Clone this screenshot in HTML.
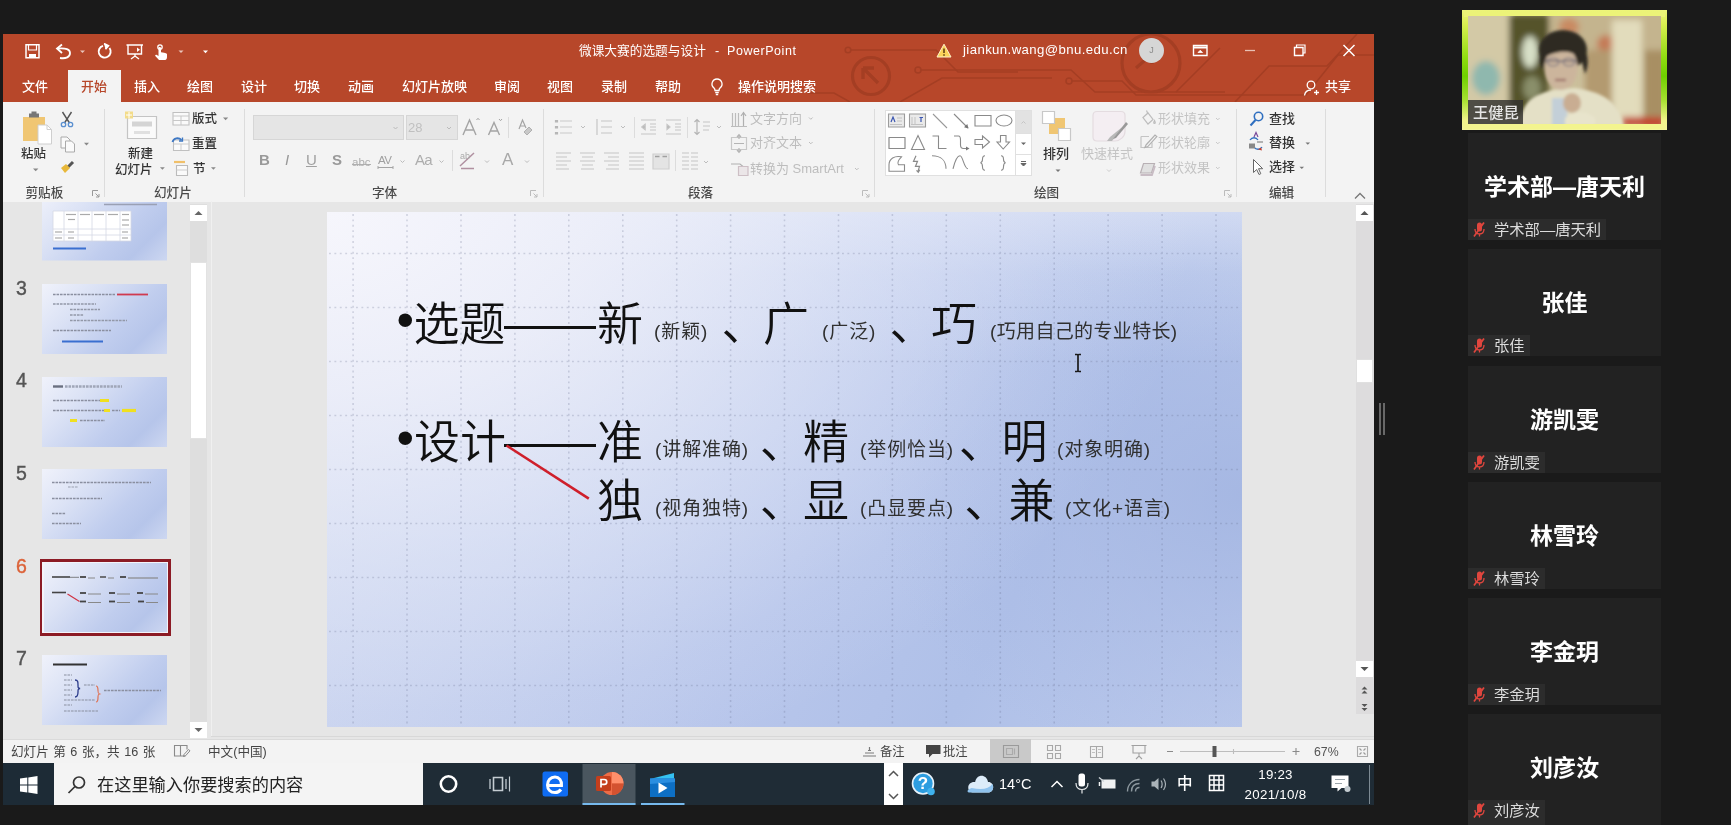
<!DOCTYPE html>
<html lang="zh-CN">
<head>
<meta charset="utf-8">
<title>微课大赛的选题与设计 - PowerPoint</title>
<style>
*{box-sizing:border-box;margin:0;padding:0}
html,body{width:1731px;height:825px;overflow:hidden;background:#1a1a1a}
body{position:relative;font-family:"Liberation Sans","Noto Sans CJK SC",sans-serif;font-size:12px;color:#333}
.a{position:absolute;white-space:nowrap}
#ppt{left:3px;top:34px;width:1371px;height:771px;background:#e6e6e6;overflow:hidden;filter:blur(.7px)}
#in{left:-3px;top:-34px;width:1731px;height:825px}
#title{left:3px;top:34px;width:1371px;height:68px;background:#b7472a}
#ribbon{left:3px;top:102px;width:1371px;height:100px;background:#f3f3f3}
.tab{top:79px;font-size:13px;font-weight:500;color:#fff;line-height:16px}
.t{font-size:11.5px;color:#333;line-height:14px;font-weight:500}
.g{color:#aaa;font-weight:400}
.gl{top:185px;font-size:12.600px;color:#4a4a4a;line-height:14px;font-weight:500}
.sep{top:108px;width:1px;height:88px;background:#dcdcdc}
#panel{left:3px;top:202px;width:1371px;height:537px;background:#e6e6e6}
.num{left:16px;font-size:19.500px;color:#505050;line-height:20px;-webkit-text-stroke:.4px currentColor}
.th{left:38px;width:126px;height:71px;background:linear-gradient(135deg,#f0f2fb 0%,#dbe2f5 30%,#c0cdee 62%,#b6c5ea 80%,#cdd7f1 100%)}
#slide{left:327px;top:212px;width:915px;height:515px;background:radial-gradient(ellipse 95% 115% at 0% 0%,rgba(246,246,252,1) 0%,rgba(240,241,250,.85) 30%,rgba(232,236,249,.5) 60%,rgba(224,230,247,.15) 85%,rgba(220,228,246,0) 100%),linear-gradient(180deg,rgba(236,239,250,.55) 0%,rgba(236,239,250,.2) 12%,rgba(236,239,250,0) 30%),radial-gradient(ellipse 40% 55% at 100% 55%,rgba(164,182,226,.9) 0%,rgba(168,185,228,.5) 50%,rgba(170,187,229,0) 100%),linear-gradient(118deg,#d2daf1 0%,#c5d0ee 30%,#b8c6eb 55%,#afc0e8 75%,#bccaec 100%);overflow:hidden}
.big{font-size:46px;line-height:50px;color:#111;font-family:"Liberation Sans","Noto Sans CJK SC",sans-serif;font-weight:350}
.sm{font-size:19px;line-height:24px;color:#303030;font-weight:400;letter-spacing:.9px}
#status{left:3px;top:739px;width:1371px;height:24px;background:#f3f3f3;border-top:1px solid #dadada}
#task{left:3px;top:763px;width:1371px;height:42px;background:#1f2c36}
.tile{left:1468px;width:193px;height:107px;background:#222;filter:blur(.45px)}
.tile b{position:absolute;left:0;right:0;top:38px;text-align:center;font-size:23px;line-height:32px;color:#fff;font-weight:700}
.tile i{position:absolute;left:0;top:86px;bottom:0;background:#2c2c2c;color:#dcdcdc;font-style:normal;font-size:15.300px;line-height:21px;padding:0 5px 0 26px}
.tile svg{position:absolute;left:4px;top:88px}
</style>
</head>
<body>
<div id="ppt" class="a"><div id="in" class="a">
<!--TITLE-->
<div id="title" class="a"></div>
<svg class="a" style="left:3px;top:34px" width="1371" height="68" viewBox="3 34 1371 68" fill="none" stroke="#a03c22" stroke-width="1.600" opacity=".8">
<circle cx="871" cy="76" r="18.500" stroke-width="3.200"/><path d="M863 68l15 15M863 68h11M863 68v11" stroke-width="3.400"/>
<circle cx="848" cy="50" r="2.800"/><path d="M851 50h85l22 22h60"/>
<circle cx="918" cy="70" r="3"/><path d="M921 70h150l24 22h130"/>
<circle cx="1151" cy="63" r="29" stroke-width="3.200"/><path d="M1136 68l16-14M1152 54h-10M1152 54v10" stroke-width="3.200"/>
<path d="M900 102l42-24h110"/><circle cx="1069" cy="81" r="3"/><path d="M1072 81h50l14 14h170l32-40h40"/>
<path d="M1235 102l34-36h58l30-32M1176 92l44-44"/>
<path d="M850 102l-16-9h-26"/>
</svg>
<svg class="a" style="left:24px;top:43px" width="190" height="18" viewBox="24 43 190 18" fill="none" stroke="#fff" stroke-width="1.5">
<path d="M26 44.7h13v13h-13z"/><path d="M28.5 45v5h8v-5" stroke-width="1.2"/><path d="M29 58v-4h7v4" fill="#fff" stroke="none"/>
<path d="M60 58c6 1 10-1 10-5s-4-5-12-4.500" stroke-width="1.8"/><path d="M62 44.500l-5 4 5 4.500" stroke-width="1.8"/>
<path d="M80 50.500l2.500 2.500 2.500-2.500z" fill="#e9c5bb" stroke="none"/>
<path d="M109.500 48a6 6 0 1 1-6.500-2.200" stroke-width="1.9"/><path d="M104 43.500l4.500 2.300-3 3.500" stroke-width="1.6" fill="#fff"/>
<path d="M126.500 45h16.500M128 45v9h13.500v-9M135 54v3M131 59l4-3 4 3" stroke-width="1.4"/><path d="M137 47.500l3 2.200-3 2.200z" fill="#fff" stroke="none"/>
<circle cx="160" cy="47" r="2.200" stroke-width="1.3"/><path d="M158.500 51v5l-2-1.200c-1-.5-1.800.6-1 1.400l3.500 3.800h6c1.500 0 2-1.500 2-3v-2.500c0-1-1-1.600-6-2.200v-4c0-1.600-2.500-1.600-2.500 0z" fill="#fff" stroke="none"/>
<path d="M178.500 50.500l2.500 2.500 2.500-2.500z" fill="#e9c5bb" stroke="none"/>
<path d="M203 50.500l2.500 2.800 2.500-2.800z" fill="#fff" stroke="none"/><path d="M203 48.300h5" stroke-width="1" opacity=".0"/>
</svg>
<div class="a" style="left:579px;top:43px;font-size:12.7px;line-height:16px;color:#fff">微课大赛的选题与设计</div>
<div class="a" style="left:715px;top:43px;font-size:12.5px;line-height:16px;color:#fff">-</div>
<div class="a" style="left:727px;top:43px;font-size:12.5px;line-height:16px;color:#fff;letter-spacing:.55px">PowerPoint</div>
<svg class="a" style="left:936px;top:43px" width="16" height="15" viewBox="0 0 16 15"><path d="M8 1.200L15 14H1z" fill="#fbd35a" stroke="#fff3c8" stroke-width="1"/><path d="M8 5.500v4.500M8 11.300v1.400" stroke="#5a3a10" stroke-width="1.5"/></svg>
<div class="a" style="left:963px;top:42px;font-size:13.2px;line-height:16px;color:#fff;letter-spacing:.4px">jiankun.wang@bnu.edu.cn</div>
<div class="a" style="left:1139px;top:38px;width:25px;height:25px;border-radius:50%;background:#d6d6d6;color:#8a8a8a;font-size:9px;line-height:25px;text-align:center">J</div>
<svg class="a" style="left:1190px;top:42px" width="170" height="18" viewBox="1190 42 170 18" fill="none" stroke="#fff" stroke-width="1.4">
<path d="M1193.500 45.500h13.500v10h-13.500z"/><path d="M1193.500 47.500h13.500" stroke-width="2"/><path d="M1198 52.500l2.300-2.300 2.300 2.300z" fill="#fff" stroke-width=".8"/>
<path d="M1245 50.500h10" stroke-width="1.300" stroke="#e8c0b4"/>
<path d="M1294.500 47.500h8.500v8h-8.500z"/><path d="M1296.500 47v-2h8.500v8h-2" stroke-width="1.200"/>
<path d="M1343.500 45l11 11M1354.500 45l-11 11" stroke-width="1.500"/>
</svg>
<div class="a" style="left:68px;top:70px;width:53px;height:33px;background:#f3f3f3"></div>
<div class="a tab" style="left:81px;color:#b7472a">开始</div>
<div class="a tab" style="left:22px">文件</div>
<div class="a tab" style="left:134px">插入</div>
<div class="a tab" style="left:187px">绘图</div>
<div class="a tab" style="left:241px">设计</div>
<div class="a tab" style="left:294px">切换</div>
<div class="a tab" style="left:348px">动画</div>
<div class="a tab" style="left:402px">幻灯片放映</div>
<div class="a tab" style="left:494px">审阅</div>
<div class="a tab" style="left:547px">视图</div>
<div class="a tab" style="left:601px">录制</div>
<div class="a tab" style="left:655px">帮助</div>
<svg class="a" style="left:709px;top:77px" width="16" height="20" viewBox="0 0 16 20" fill="none" stroke="#fff" stroke-width="1.300"><path d="M8 2a5 5 0 0 0-3 9c.8.800 1 1.500 1 2.500h4c0-1 .2-1.700 1-2.500a5 5 0 0 0-3-9z"/><path d="M6.200 15.500h3.600M6.800 17.500h2.400"/></svg>
<div class="a tab" style="left:738px">操作说明搜索</div>
<svg class="a" style="left:1302px;top:79px" width="18" height="18" viewBox="0 0 18 18" fill="none" stroke="#fff" stroke-width="1.300"><circle cx="9" cy="6" r="3.800"/><path d="M2.500 16.500c.5-4 3-5.500 6.500-5.500M12 13.500h5M14.500 11v5"/></svg>
<div class="a tab" style="left:1325px">共享</div>

<!--RIBBON-->
<div id="ribbon" class="a"></div>
<div class="a" style="left:0;top:1px;width:1731px;height:0">
<!-- clipboard -->
<svg class="a" style="left:18px;top:108px" width="80" height="72" viewBox="18 108 80 72" fill="none">
<path d="M23 116h22v24h-22z" fill="#f0c673"/><path d="M29 112.500h10v4h-10z" fill="#777"/><path d="M31.500 110.500h5v3h-5z" fill="#777"/>
<path d="M38 124h9l4.500 4.500v14.500h-13.500z" fill="#fff" stroke="#cfcfcf" stroke-width="1"/><path d="M47 124v4.500h4.500" stroke="#cfcfcf" stroke-width="1"/>
<path d="M33 167.500l2.700 2.700 2.700-2.700z" fill="#888"/>
<path d="M62.500 111l7 11M71.500 111l-7 11" stroke="#555" stroke-width="1.400"/><circle cx="63.500" cy="123.500" r="2.200" stroke="#5a8fd0" stroke-width="1.300"/><circle cx="70.500" cy="123.500" r="2.200" stroke="#5a8fd0" stroke-width="1.300"/>
<path d="M61 136h6l3 3v8h-9z" fill="#fafafa" stroke="#aaa" stroke-width="1"/><path d="M65.500 140h6l3 3v8h-9z" fill="#fafafa" stroke="#aaa" stroke-width="1"/>
<path d="M84 141.800l2.500 2.600 2.500-2.600z" fill="#888"/>
<path d="M66 168l7-7" stroke="#555" stroke-width="3"/><path d="M61 167l5-4 4 4-5 5z" fill="#e8b83a"/>
</svg>
<div class="a t" style="left:21px;top:146px;font-size:12.500px">粘贴</div>
<div class="a gl" style="left:25.500px">剪贴板</div>
<svg class="a" style="left:92px;top:189px" width="8" height="8" viewBox="0 0 8 8" fill="none" stroke="#999" stroke-width="1"><path d="M.5 6V.5H6M3.500 3.500l3.500 3.500M7 4v3H4"/></svg>
<div class="a sep" style="left:104px"></div>
<!-- slides -->
<svg class="a" style="left:120px;top:108px" width="100" height="72" viewBox="120 108 100 72" fill="none">
<path d="M127.500 115.500h29v22h-29z" fill="#fafafa" stroke="#c4c4c4" stroke-width="1.200"/><path d="M132 120.500h20v5h-20z" fill="#d4d4d4"/><path d="M134 130h16v3h-16z" fill="#e0e0e0"/>
<path d="M125 110.500h8v7h-8z" fill="#f3dc8a"/><path d="M129 111v6M126 114h6" stroke="#fff" stroke-width="1"/>
<path d="M173 111.500h16v12.500h-16z" fill="#fafafa" stroke="#c0c0c0" stroke-width="1.100"/><path d="M173 115h16M181 115v9M173 119.500h16" stroke="#c8c8c8" stroke-width="1"/>
<path d="M224 117.500l2.400 2.500 2.400-2.500z" fill="#888"/>
<path d="M173.500 139h15.500v10.500h-15.500z" fill="#fafafa" stroke="#c0c0c0" stroke-width="1.100"/><path d="M173.500 143h15.500M181 143v6" stroke="#ccc" stroke-width="1"/><path d="M172.500 141c1-4 6-5 9-2" stroke="#3e78c4" stroke-width="1.800"/><path d="M182.500 136.500v3.500h-3.500" stroke="#3e78c4" stroke-width="1.300"/>
<path d="M174 161h11" stroke="#f0c06a" stroke-width="2.200"/><path d="M176.500 164.500h11v10h-11z" fill="#fafafa" stroke="#bbb" stroke-width="1.100"/><path d="M176.500 169h11" stroke="#ccc"/>
<path d="M160 166.300l2.400 2.500 2.400-2.500z" fill="#888"/><path d="M211 166.300l2.400 2.500 2.400-2.500z" fill="#888"/>
</svg>
<svg class="a" style="left:222px;top:115px" width="8" height="6" viewBox="0 0 8 6"><path d="M1 1.500l2.600 2.700 2.600-2.700z" fill="#888"/></svg>
<div class="a t" style="left:128px;top:146px;font-size:12.500px">新建</div>
<div class="a t" style="left:115px;top:162px;font-size:12.500px">幻灯片</div>
<div class="a t" style="left:192px;top:111px;font-size:12.500px">版式</div>
<div class="a t" style="left:192px;top:136px;font-size:12.500px">重置</div>
<div class="a t" style="left:193px;top:161px;font-size:12.500px">节</div>
<div class="a gl" style="left:154px">幻灯片</div>
<div class="a sep" style="left:244px"></div>
<!-- font -->
<div class="a" style="left:253px;top:114px;width:151px;height:25px;background:#e5e5e5;border:1px solid #d6d6d6"></div>
<div class="a" style="left:406px;top:114px;width:52px;height:25px;background:#e5e5e5;border:1px solid #d6d6d6"></div>
<div class="a" style="left:408px;top:119px;font-size:13px;line-height:16px;color:#c0c0c0">28</div>
<svg class="a" style="left:250px;top:108px" width="292" height="72" viewBox="250 108 292 72" fill="none" stroke="#a4a4a4" stroke-width="1.400">
<path d="M393.500 126l2 2 2-2M447 126l2 2 2-2" stroke="#bbb" stroke-width="1"/>
<path d="M463 134l6.500-15 6.500 15M465.500 129h8" /><path d="M476.500 119l1.500-1.700 1.500 1.700" stroke-width="1"/>
<path d="M488.500 134l5.500-12.500 5.500 12.500M490.500 130h7"/><path d="M499 118l1.500 1.700 1.500-1.700" stroke-width="1"/>
<path d="M508.500 116v21" stroke="#dcdcdc" stroke-width="1"/>
<path d="M519 128l3.500-9 3.500 8M520 125h5" stroke-width="1.200"/><path d="M524 131l5-5 3 3-5 5z" fill="#c8c8c8" stroke="#b0b0b0" stroke-width="1"/>
<path d="M452.500 149v21" stroke="#dcdcdc" stroke-width="1"/>
<path d="M352 163.500h19" stroke="#b0b0b0" stroke-width="1"/>
<path d="M378 166.500h15M378 165v3M393 165v3" stroke-width="1"/>
<path d="M400.500 159.500l2 2 2-2M439.500 159.500l2 2 2-2M485 159.500l2 2 2-2M525 159.500l2 2 2-2" stroke="#bbb" stroke-width="1"/>
<path d="M460 165l14-13M461 167.500h13" stroke="#b090a0" stroke-width="1.500"/>
<path d="M533.500 190" />
</svg>
<div class="a" style="left:259px;top:150px;font-size:15px;line-height:18px;color:#999;font-weight:700">B</div>
<div class="a" style="left:285px;top:150px;font-size:15px;line-height:18px;color:#999;font-style:italic">I</div>
<div class="a" style="left:306px;top:150px;font-size:15px;line-height:18px;color:#a0a0a0;text-decoration:underline">U</div>
<div class="a" style="left:332px;top:150px;font-size:15px;line-height:18px;color:#999;font-weight:700">S</div>
<div class="a" style="left:352px;top:154px;font-size:11.500px;line-height:14px;color:#adadad">abc</div>
<div class="a" style="left:378px;top:152px;font-size:11.500px;line-height:14px;color:#a0a0a0;letter-spacing:-.5px">AV</div>
<div class="a" style="left:415px;top:150px;font-size:15px;line-height:18px;color:#adadad;letter-spacing:-.8px">Aa</div>
<div class="a" style="left:460px;top:150px;font-size:9px;line-height:10px;color:#aaa">ab</div>
<div class="a" style="left:502px;top:149px;font-size:17px;line-height:20px;color:#a8a8a8">A</div>
<div class="a gl" style="left:372px;">字体</div>
<svg class="a" style="left:530px;top:189px" width="8" height="8" viewBox="0 0 8 8" fill="none" stroke="#bbb" stroke-width="1"><path d="M.5 6V.5H6M3.500 3.500l3.500 3.500M7 4v3H4"/></svg>
<div class="a sep" style="left:543px"></div>
<!-- paragraph -->
<svg class="a" style="left:550px;top:108px" width="320" height="72" viewBox="550 108 320 72" fill="none" stroke="#c6c6c6" stroke-width="1.200">
<g stroke="#c9c9c9"><path d="M560 120h12M560 126h12M560 132h12"/><path d="M555.500 119.500h2v1.500h-2zM555.500 125.500h2v1.500h-2zM555.500 131.500h2v1.500h-2z" fill="#bbb" stroke="#b6b6b6"/></g>
<path d="M597 118v16M601 120h11M601 126h11M601 132h11"/>
<path d="M581 125l2 2 2-2M621 125l2 2 2-2M717 125l2 2 2-2M809 116.500l1.800 1.800 1.800-1.800M809 141l1.800 1.800 1.800-1.800M855 167l1.800 1.800 1.800-1.800M704 160l2 2 2-2" stroke="#bdbdbd" stroke-width="1"/>
<path d="M634.500 116v21M687.500 116v21M675.500 149v21" stroke="#dcdcdc" stroke-width="1"/>
<path d="M641 119h15M641 133h15M650 123h6M650 126h6M650 129h6M645 123.500l-3 2.500 3 2.500z"/><path d="M645 123.500l-3 2.500 3 2.500z" fill="#b0b0b0"/>
<path d="M666 119h15M666 133h15M675 123h6M675 126h6M675 129h6"/><path d="M667 123.500l3 2.500-3 2.500z" fill="#b0b0b0"/>
<path d="M697 118.500v15M694.500 121l2.500-2.500 2.500 2.500M694.500 131l2.500 2.500 2.500-2.500" stroke="#b4b4b4"/><path d="M703 121h7M703 125h7M703 129h6"/>
<path d="M556 152h15M556 156h11M556 160h15M556 164h11M556 168h13"/>
<path d="M580 152h15M582 156h11M580 160h15M582 164h11M581 168h13"/>
<path d="M604 152h15M608 156h11M604 160h15M608 164h11M606 168h13"/>
<path d="M629 152h15M629 156h15M629 160h15M629 164h15M629 168h15"/>
<path d="M653 153h16v15h-16z" fill="#e4e4e4" stroke="#cfcfcf"/><path d="M655 155.500h4.500M662.500 155.500h4.500" stroke="#a0a0a0" stroke-width="1.500"/>
<path d="M682 152h7M691 152h7M682 156h7M691 156h7M682 160h7M691 160h7M682 164h7M691 164h7M682 168h7M691 168h7"/>
<path d="M732.500 112v13M735.500 112v13M738.500 112v13M731 125.500h16" stroke="#bcbcbc"/><path d="M743.500 112v13M741 115l2.500-3.500 2.500 3.500" stroke="#b0b0b0"/>
<path d="M731.500 136.500h15v12h-15z" stroke="#c8c8c8"/><path d="M739 134v4M737 136l2-2.300 2 2.300M739 147v4M737 149l2 2.300 2-2.300M734 142.500h10" stroke="#b4b4b4"/>
<path d="M731 163h9l3 2.500-3 2.500" stroke="#b0b0b0"/><path d="M738.500 165.500h9.500v9h-9.500z" fill="#ebe6e8" stroke="#cdbfc5"/>
</svg>
<div class="a t g" style="left:750px;top:111px;font-size:13px;color:#bdbdbd">文字方向</div>
<div class="a t g" style="left:750px;top:135px;font-size:13px;color:#bdbdbd">对齐文本</div>
<div class="a t g" style="left:750px;top:161px;font-size:13px;color:#bdbdbd">转换为 SmartArt</div>
<div class="a gl" style="left:688px;">段落</div>
<svg class="a" style="left:862px;top:189px" width="8" height="8" viewBox="0 0 8 8" fill="none" stroke="#bbb" stroke-width="1"><path d="M.5 6V.5H6M3.500 3.500l3.500 3.500M7 4v3H4"/></svg>
<div class="a sep" style="left:874px"></div>
<!-- drawing -->
<div class="a" style="left:885px;top:109px;width:147px;height:66px;background:#fff;border:1px solid #e0e0e0"></div>
<div class="a" style="left:1016px;top:110px;width:15px;height:22px;background:#e2e2e2"></div>
<div class="a" style="left:1015px;top:110px;width:1px;height:64px;background:#e0e0e0"></div>
<div class="a" style="left:1016px;top:132px;width:15px;height:1px;background:#e0e0e0"></div>
<div class="a" style="left:1016px;top:153px;width:15px;height:1px;background:#e0e0e0"></div>
<svg class="a" style="left:886px;top:110px" width="146" height="64" viewBox="886 110 146 64" fill="none" stroke="#8a8a8a" stroke-width="1.100">
<path d="M888.500 113h16v13h-16z" fill="#eaeaea" stroke="#9c9c9c"/><path d="M891 121l2-5 2 5" stroke="#3a55b0" stroke-width="1.200"/><path d="M897 117h5M897 120h5M890 123.500h12" stroke="#c2c2c2" stroke-width="1"/>
<path d="M909.500 113h16v13h-16z" fill="#eaeaea" stroke="#9c9c9c"/><path d="M919.500 116.500l3.500 0M921 116v5" stroke="#3a55b0" stroke-width="1.200"/><path d="M912 116v8M915 116v8M911 123.500h12" stroke="#c2c2c2" stroke-width="1"/>
<path d="M933 113l14 14" stroke="#9a9a9a"/><path d="M954 113l14 14" stroke="#8a8a8a"/><path d="M968.500 127.500l-4.500-1.200 3.300-3.300z" fill="#777" stroke="none"/>
<path d="M975 114.500h16v10.500h-16z"/><ellipse cx="1004" cy="119.500" rx="8" ry="5.500"/>
<path d="M889 136.500h16v11h-16z" stroke-linejoin="round" stroke-width="1.200"/><path d="M911.500 148.500l6.500-14 6.500 14z"/>
<path d="M932.500 135h6v12.500h8" /><path d="M954 135h4.500c2 0 2 2 2 4v5c0 2 1 3.500 3 3.500h4"/><path d="M969.500 147.500l-3.500-2v4z" fill="#777" stroke="none"/>
<path d="M975 138.500h7.500v-3.500l7 6-7 6v-3.500h-7.500z"/><path d="M1000.500 134.500h5.500v6.500h3.500l-6.300 7-6.200-7h3.500z"/>
<g transform="translate(0,-2.200)"><path d="M889 172.500h15.500v-6.500h-6c-1.500-2 0-5 3-8-7-1.500-12.500 2-12.500 8z"/><path d="M916 157l-2.500 5.500h4l-2 5h4l-1.500 5M916.500 171.500l1.800 2 1.500-2.500" stroke-width="1.200"/>
<path d="M932 157c9 0 14 5 14 13"/><path d="M953 170c2-8 4-13 7-13s4 13 8 13"/>
<path d="M985 157c-2.500 0-2.500 1.500-2.500 3.500s0 3-2 3.500c2 .5 2 2 2 4s0 3.500 2.500 3.500"/><path d="M1001 157c2.500 0 2.500 1.500 2.500 3.500s0 3 2 3.500c-2 .5-2 2-2 4s0 3.500-2.500 3.500"/></g>
<path d="M1021.500 122.500l2-2 2 2" stroke="#c4c4c4" stroke-width="1"/><path d="M1021 141.500l2.500 2.500 2.500-2.500z" fill="#666" stroke="none"/><path d="M1021 162.500l2.500 2.500 2.500-2.500zM1021 160.500h5" fill="#666" stroke="#666" stroke-width="1"/>
</svg>
<svg class="a" style="left:1040px;top:108px" width="92" height="68" viewBox="1040 108 92 68" fill="none">
<path d="M1049 117h16v16h-16z" fill="#f0c673"/><path d="M1042.500 110.500h12v12h-12z" fill="#fff" stroke="#c8c8c8" stroke-width="1.200"/><path d="M1058.500 127.500h12v12h-12z" fill="#fff" stroke="#c8c8c8" stroke-width="1.200"/>
<path d="M1055.500 168.500l2.500 2.500 2.500-2.500z" fill="#777"/><path d="M1107 168.500l2 2 2-2" stroke="#ccc" stroke-width="1"/>
<path d="M1097 110.500h24c2.500 0 4 1.500 4 4v16c0 5-5 9.500-10 9.500h-18c-2.500 0-4-1.500-4-4v-21.500c0-2.500 1.500-4 4-4z" fill="#f4eef2" stroke="#e4dce0" stroke-width="1.200"/>
<path d="M1126 123l-14 17h-5l3-4z" fill="#b8b8b8"/><path d="M1126 121l2 2-12 14-3 1z" fill="#999"/>
</svg>
<div class="a t" style="left:1043px;top:146px;font-size:13px">排列</div>
<div class="a t g" style="left:1081px;top:146px;font-size:13px;color:#c4c4c4">快速样式</div>
<svg class="a" style="left:1138px;top:108px" width="95" height="70" viewBox="1138 108 95 70" fill="none" stroke="#bdbdbd" stroke-width="1.200">
<path d="M1143 116.500l5-4.500 5 6.500-5 4.500z"/><path d="M1146.500 109.500l1.500 3.500M1154.500 119.500c1 2 1 3 0 3s-1-1 0-3z"/>
<path d="M1141 135.500h8M1141 135.500v11h11v-5" stroke="#c4c4c4"/><path d="M1146 144l9-10 1.800 1.600-9 10-3 1z" stroke="#b0b0b0"/>
<path d="M1143.500 162.500h11l-3 9.500h-11z" fill="#e0e0e0" stroke="#b8b0b4"/><path d="M1140.500 174h11.500l3-9" stroke="#c8bcc4" stroke-width="1.800"/>
<path d="M1216 117l1.800 1.800 1.800-1.800M1216 141l1.800 1.800 1.800-1.800M1216 166l1.800 1.800 1.800-1.800" stroke="#c8c8c8" stroke-width="1"/>
</svg>
<div class="a t g" style="left:1158px;top:111px;font-size:13px;color:#c4c4c4">形状填充</div>
<div class="a t g" style="left:1158px;top:135px;font-size:13px;color:#c4c4c4">形状轮廓</div>
<div class="a t g" style="left:1158px;top:160px;font-size:13px;color:#c4c4c4">形状效果</div>
<div class="a gl" style="left:1034px;">绘图</div>
<svg class="a" style="left:1224px;top:189px" width="8" height="8" viewBox="0 0 8 8" fill="none" stroke="#bbb" stroke-width="1"><path d="M.5 6V.5H6M3.500 3.500l3.500 3.500M7 4v3H4"/></svg>
<div class="a sep" style="left:1236px"></div>
<!-- editing -->
<svg class="a" style="left:1246px;top:108px" width="70" height="70" viewBox="1246 108 70 70" fill="none">
<circle cx="1258.500" cy="115.500" r="4.200" stroke="#2f6fc0" stroke-width="1.600"/><path d="M1255.500 119l-5 5.500" stroke="#2f6fc0" stroke-width="2"/>
<path d="M1250 139c2-3 6-3 8 0M1262 146c-2 3-6 3-8 0" stroke="#2f6fc0" stroke-width="1.300"/><path d="M1254 136l2-4.500 2 4.500" stroke="#7a4a9a" stroke-width="1.200"/><path d="M1249 142.500h6v5h-6z" fill="#888"/><path d="M1257 141h6" stroke="#888" stroke-width="1.200"/><path d="M1258 148.500l3-2 1 3z" fill="#c04030"/>
<path d="M1253.500 158.500v13l3.200-3 2.300 5 1.800-.800-2.300-5h4.200z" fill="#fff" stroke="#666" stroke-width="1"/>
<path d="M1305.500 141.500l2.300 2.300 2.300-2.300z" fill="#777"/><path d="M1299.500 165.800l2.300 2.300 2.300-2.300z" fill="#777"/>
</svg>
<div class="a t" style="left:1269px;top:111px;font-size:13px">查找</div>
<div class="a t" style="left:1269px;top:135px;font-size:13px">替换</div>
<div class="a t" style="left:1269px;top:159px;font-size:13px">选择</div>
<div class="a gl" style="left:1269px;">编辑</div>
<div class="a sep" style="left:1325px"></div>
<svg class="a" style="left:1353px;top:190px" width="14" height="10" viewBox="0 0 14 10" fill="none" stroke="#777" stroke-width="1.300"><path d="M2 7.500l5-5 5 5"/></svg>
</div>
<!--PANEL-->
<div id="panel" class="a"></div>
<div class="a" style="left:211px;top:201px;width:1px;height:536px;background:#f0f0f0"></div>
<div class="a" style="left:211px;top:736px;width:1163px;height:1px;background:#d8d8d8"></div>
<div class="a" style="left:190px;top:204px;width:17px;height:534px;background:#dedede"></div>
<div class="a" style="left:190px;top:205px;width:17px;height:16px;background:#fff"></div>
<div class="a" style="left:190px;top:262px;width:17px;height:177px;background:#fff;border:1px solid #e2e2e2"></div>
<div class="a" style="left:190px;top:722px;width:17px;height:16px;background:#fff"></div>
<svg class="a" style="left:190px;top:205px" width="17" height="534" viewBox="190 205 17 534"><path d="M194.500 215l4-4 4 4z" fill="#666"/><path d="M194.500 728l4 4 4-4z" fill="#666"/></svg>
<div class="a" style="left:1356px;top:204px;width:18px;height:510px;background:#dddcdd"></div>
<div class="a" style="left:1356px;top:205px;width:17px;height:16px;background:#fff"></div>
<div class="a" style="left:1356px;top:359px;width:17px;height:24px;background:#fff;border:1px solid #e0e0e0"></div>
<div class="a" style="left:1356px;top:661px;width:17px;height:16px;background:#fff"></div>
<svg class="a" style="left:1356px;top:205px" width="17" height="520" viewBox="1356 205 17 520" fill="#555"><path d="M1360.500 215l4-4 4 4z"/><path d="M1360.500 667l4 4 4-4z"/><path d="M1361.500 689.500l3-3 3 3zM1361.500 693.500l3-3 3 3z"/><path d="M1361.500 704l3 3 3-3zM1361.500 708l3 3 3-3z"/></svg>
<div class="a th" style="left:42px;top:202px;width:125px;height:58.500px;background-size:100% 70px;background-position:0 100%"></div>
<div class="a th" style="left:42px;top:284px;width:125px;height:70px"></div>
<div class="a num" style="top:277.5px;color:#555">3</div>
<div class="a th" style="left:42px;top:376.5px;width:125px;height:70px"></div>
<div class="a num" style="top:370px;color:#555">4</div>
<div class="a th" style="left:42px;top:469px;width:125px;height:70px"></div>
<div class="a num" style="top:462.5px;color:#555">5</div>
<div class="a th" style="left:42px;top:654.5px;width:125px;height:70px"></div>
<div class="a num" style="top:648px;color:#555">7</div>
<div class="a" style="left:39.500px;top:559px;width:131px;height:76.500px;background:#8c1b25"></div>
<div class="a" style="left:42.200px;top:561.700px;width:125.600px;height:71.100px;background:#f4f4fa"></div>
<div class="a th" style="left:43.500px;top:563px;width:123px;height:68.500px"></div>
<div class="a num" style="top:555.5px;color:#dc6238">6</div>
<svg class="a" style="left:40px;top:200px" width="130" height="536" viewBox="40 200 130 536" fill="none">
<path d="M53 211h78v30h-78z" fill="#fff" stroke="#d4d8e4" stroke-width=".8"/><path d="M64 211v30M78 211v30M92 211v30M106 211v30M120 211v30M53 229h78M53 235h78" stroke="#d4d8e4" stroke-width=".8"/><path d="M66 214.5H76" stroke="#aaa" stroke-width="1.2"/><path d="M80 214.5H90" stroke="#aaa" stroke-width="1.2"/><path d="M94 214.5H104" stroke="#aaa" stroke-width="1.2"/><path d="M108 214.5H118" stroke="#aaa" stroke-width="1.2"/><path d="M122 214.5H129" stroke="#aaa" stroke-width="1.2"/><path d="M68 219.5H75" stroke="#aaa" stroke-width="1.2"/><path d="M122 220H129" stroke="#aaa" stroke-width="1.2"/><path d="M122 225H129" stroke="#aaa" stroke-width="1.2"/><path d="M55 232H62" stroke="#aaa" stroke-width="1.2"/><path d="M68 232H74" stroke="#aaa" stroke-width="1.2"/><path d="M55 238H62" stroke="#aaa" stroke-width="1.2"/><path d="M68 238H74" stroke="#aaa" stroke-width="1.2"/><path d="M122 232H128" stroke="#aaa" stroke-width="1.2"/><path d="M122 238H128" stroke="#aaa" stroke-width="1.2"/><path d="M104 204.5H157" stroke="#9aa0b4" stroke-width="1.4"/><path d="M53 248.5H86" stroke="#3a6fd0" stroke-width="2"/><path d="M53 294.5H115" stroke="#8a8fa0" stroke-width="1.6" stroke-dasharray="2.600 .900"/><path d="M117 294.5H148" stroke="#d03a50" stroke-width="1.8"/><path d="M53 304H96" stroke="#9298a8" stroke-width="1.3" stroke-dasharray="2.600 .900"/><path d="M70 309.5H100" stroke="#9298a8" stroke-width="1.3" stroke-dasharray="2.600 .900"/><path d="M70 315H84" stroke="#9298a8" stroke-width="1.3" stroke-dasharray="2.600 .900"/><path d="M70 320.5H127" stroke="#9298a8" stroke-width="1.3" stroke-dasharray="2.600 .900"/><path d="M53 330.5H111" stroke="#8a8fa0" stroke-width="1.6" stroke-dasharray="2.600 .900"/><path d="M62 341.5H103" stroke="#3a6fd0" stroke-width="2"/><path d="M53 386.5H63" stroke="#6a7080" stroke-width="2.4"/><path d="M65 386.5H122" stroke="#a0a6b8" stroke-width="2.4" stroke-dasharray="2.600 .900"/><path d="M53 400.5H100" stroke="#8a8fa0" stroke-width="1.5" stroke-dasharray="2.600 .900"/><path d="M100 400.5H109" stroke="#f0e020" stroke-width="3"/><path d="M53 410.5H104" stroke="#8a8fa0" stroke-width="1.5" stroke-dasharray="2.600 .900"/><path d="M104 410.5H110" stroke="#f0e020" stroke-width="3"/><path d="M112 410.5H120" stroke="#8a8fa0" stroke-width="1.5" stroke-dasharray="2.600 .900"/><path d="M122 410.5H136" stroke="#f0e020" stroke-width="3.2"/><path d="M70 420.5H77" stroke="#f0e020" stroke-width="3"/><path d="M80 420.5H105" stroke="#8a8fa0" stroke-width="1.5" stroke-dasharray="2.600 .900"/><path d="M52 482.5H151" stroke="#8a8fa0" stroke-width="1.5" stroke-dasharray="2.600 .900"/><path d="M68 487H78" stroke="#9aa0b0" stroke-width="1.2" stroke-dasharray="2.600 .900"/><path d="M52 498.5H102" stroke="#8a8fa0" stroke-width="1.5" stroke-dasharray="2.600 .900"/><path d="M52 513.5H66" stroke="#8a8fa0" stroke-width="1.5" stroke-dasharray="2.600 .900"/><path d="M52 523.5H81" stroke="#8a8fa0" stroke-width="1.5" stroke-dasharray="2.600 .900"/><path d="M52 577H70" stroke="#444" stroke-width="1.6"/><path d="M70 577.3H79" stroke="#666" stroke-width="0.8"/><path d="M80 577H86" stroke="#444" stroke-width="1.8"/><path d="M88 578H95" stroke="#888" stroke-width="1"/><path d="M100 577H106" stroke="#555" stroke-width="1.6"/><path d="M108 578H114" stroke="#888" stroke-width="1"/><path d="M120 577H126" stroke="#444" stroke-width="1.8"/><path d="M128 578H158" stroke="#888" stroke-width="1.2"/><path d="M52 592.5H66" stroke="#444" stroke-width="1.6"/><path d="M80 593H86" stroke="#444" stroke-width="1.8"/><path d="M88 594H101" stroke="#888" stroke-width="1"/><path d="M109 593H115" stroke="#444" stroke-width="1.8"/><path d="M117 594H130" stroke="#888" stroke-width="1"/><path d="M137 593H143" stroke="#444" stroke-width="1.8"/><path d="M145 594H158" stroke="#888" stroke-width="1"/><path d="M80 601.5H86" stroke="#444" stroke-width="1.8"/><path d="M88 602.5H101" stroke="#888" stroke-width="1"/><path d="M109 601.5H115" stroke="#444" stroke-width="1.8"/><path d="M117 602.5H130" stroke="#888" stroke-width="1"/><path d="M138 601.5H144" stroke="#444" stroke-width="1.8"/><path d="M146 602.5H158" stroke="#888" stroke-width="1"/><path d="M67.500 594l12 7.500" stroke="#d03040" stroke-width="1.100"/><path d="M53 664.5H87" stroke="#333" stroke-width="2.2"/><path d="M64 675H72" stroke="#8a8fa0" stroke-width="1.1" stroke-dasharray="2.600 .900"/><path d="M64 680H72" stroke="#8a8fa0" stroke-width="1.1" stroke-dasharray="2.600 .900"/><path d="M64 685H72" stroke="#8a8fa0" stroke-width="1.1" stroke-dasharray="2.600 .900"/><path d="M64 690H72" stroke="#8a8fa0" stroke-width="1.1" stroke-dasharray="2.600 .900"/><path d="M64 695H72" stroke="#8a8fa0" stroke-width="1.1" stroke-dasharray="2.600 .900"/><path d="M64 700H95" stroke="#8a8fa0" stroke-width="1.1" stroke-dasharray="2.600 .900"/><path d="M64 705H72" stroke="#8a8fa0" stroke-width="1.1" stroke-dasharray="2.600 .900"/><path d="M64 711H98" stroke="#8a8fa0" stroke-width="1.2" stroke-dasharray="2.600 .900"/><path d="M75 680c3 0 3 2 3 5s0 3 2 3.500c-2 .500-2 1-2 3.500s0 5-3 5" stroke="#2a3a8a" stroke-width="1.300"/><path d="M84 685H95" stroke="#8a8fa0" stroke-width="1.2" stroke-dasharray="2.600 .900"/><path d="M96 686c2 0 2 2 2 4.500s0 3 1.500 3.500c-1.500.500-1.500 1-1.500 3.500s0 4.500-2 4.500" stroke="#e07050" stroke-width="1.200"/><path d="M104 690.5H161" stroke="#8a8fa0" stroke-width="1.4" stroke-dasharray="2.600 .900"/></svg>
<!--SLIDE-->
<!--SLIDE_BEGIN-->
<div id="slide" class="a">
<svg class="a" style="left:0;top:0" width="915" height="515" viewBox="327 212 915 515" fill="none" stroke="#5f6788" stroke-width="1.600" stroke-dasharray="1.900 3.500" opacity=".24">
<path d="M353.1 214V726M407.0 214V726M461.0 214V726M514.9 214V726M568.8 214V726M622.8 214V726M676.7 214V726M730.6 214V726M784.5 214V726M838.5 214V726M892.4 214V726M946.3 214V726M1000.3 214V726M1054.2 214V726M1108.1 214V726M1162.1 214V726M1216.0 214V726"/>
<path d="M329 253.5H1240M329 307.5H1240M329 361.5H1240M329 415.5H1240M329 469.5H1240M329 523.5H1240M329 577.5H1240M329 631.5H1240M329 685.5H1240"/>
</svg>
<div class="a big" style="left:69.5px;top:83px;font-size:50px">•</div>
<div class="a big" style="left:177px;top:86px;font-weight:300">——</div>
<div class="a big" style="left:86.5px;top:87px">选题</div>
<div class="a big" style="left:270px;top:87px">新</div>
<div class="a big" style="left:394.5px;top:87px">、</div>
<div class="a big" style="left:436px;top:87px">广</div>
<div class="a big" style="left:562.5px;top:87px">、</div>
<div class="a big" style="left:604px;top:87px">巧</div>
<div class="a sm" style="left:327px;top:108px">(新颖)</div>
<div class="a sm" style="left:495px;top:108px">(广泛)</div>
<div class="a sm" style="left:663px;top:108px;letter-spacing:.35px">(巧用自己的专业特长)</div>
<div class="a big" style="left:69.5px;top:200.5px;font-size:50px">•</div>
<div class="a big" style="left:177px;top:203.5px;font-weight:300">——</div>
<div class="a big" style="left:87px;top:204.5px">设计</div>
<div class="a big" style="left:270px;top:204.5px">准</div>
<div class="a big" style="left:432.7px;top:204.5px">、</div>
<div class="a big" style="left:476px;top:204.5px">精</div>
<div class="a big" style="left:631.7px;top:204.5px">、</div>
<div class="a big" style="left:674.5px;top:204.5px">明</div>
<div class="a sm" style="left:328px;top:225.5px">(讲解准确)</div>
<div class="a sm" style="left:533px;top:225.5px">(举例恰当)</div>
<div class="a sm" style="left:730px;top:225.5px">(对象明确)</div>
<div class="a big" style="left:270px;top:263.5px">独</div>
<div class="a big" style="left:432.7px;top:263.5px">、</div>
<div class="a big" style="left:476px;top:263.5px">显</div>
<div class="a big" style="left:637.2px;top:263.5px">、</div>
<div class="a big" style="left:681.5px;top:263.5px">兼</div>
<div class="a sm" style="left:328px;top:284.5px">(视角独特)</div>
<div class="a sm" style="left:533px;top:284.5px">(凸显要点)</div>
<div class="a sm" style="left:738px;top:284.5px">(文化+语言)</div>
<svg class="a" style="left:0;top:0" width="915" height="515" viewBox="327 212 915 515" fill="none"><path d="M506.500 445.500L588.800 498.700" stroke="#cf1f2b" stroke-width="2.600"/><path d="M1075 354.500h2.200c.8 0 .8.500.8 1.500v14c0 1-.0 1.500-.8 1.500h-2.200M1081 354.500h-2.200c-.8 0-.8.500-.8 1.500M1081 371.500h-2.200c-.8 0-.8-.500-.8-1.500" stroke="#1a1a1a" stroke-width="1.700"/></svg>
</div>
<!--SLIDE_END-->
<!--STATUS-->
<div id="status" class="a"></div>
<div class="a" style="left:11px;top:744px;font-size:12.600px;line-height:16px;color:#444;word-spacing:1px">幻灯片 第 6 张，共 16 张</div>
<svg class="a" style="left:173px;top:743px" width="18" height="16" viewBox="0 0 18 16" fill="none" stroke="#8a8a8a" stroke-width="1.100"><path d="M1.500 2.500h6v10.500h-6zM7.500 2.500h6.500v4M7.500 13h5"/><path d="M11 11.500l4.500-5 1.500 1.300-4.500 5-2 .700z" stroke-width="1"/></svg>
<div class="a" style="left:208px;top:744px;font-size:12.600px;line-height:16px;color:#444">中文(中国)</div>
<svg class="a" style="left:862px;top:744px" width="16" height="14" viewBox="0 0 16 14" fill="none" stroke="#7a7a7a" stroke-width="1.200"><path d="M1 12h13M3 9h9M6 6.500h3M7.500 3v3"/></svg>
<div class="a" style="left:880px;top:744px;font-size:12.300px;line-height:16px;color:#444">备注</div>
<svg class="a" style="left:925px;top:744px" width="18" height="15" viewBox="0 0 18 15"><path d="M1 1h14.500v9h-8l-3.500 3.500v-3.500h-3z" fill="#444"/></svg>
<div class="a" style="left:943px;top:744px;font-size:12.300px;line-height:16px;color:#444">批注</div>
<div class="a" style="left:990px;top:739px;width:41px;height:24px;background:#c9c9c9"></div>
<svg class="a" style="left:1000px;top:742px" width="160" height="20" viewBox="1000 742 160 20" fill="none" stroke="#9a9a9a" stroke-width="1.100"><path d="M1003.500 745.500h15v12h-15z"/><path d="M1006.500 748.500h6v6h-6zM1014.500 748.500v6" stroke="#aaa"/><path d="M1047.500 745.500h5v5h-5zM1055.500 745.500h5v5h-5zM1047.500 753.500h5v5h-5zM1055.500 753.500h5v5h-5z" stroke="#a8a8a8"/><path d="M1090.500 746.500h6v11h-6zM1096.500 746.500h6v11h-6z" stroke="#a8a8a8"/><path d="M1092 749.500h3M1098 749.500h3M1092 752.500h3M1098 752.500h3" stroke="#c0c0c0"/><path d="M1131.500 745.500h15M1133 745.500v7.500h12v-7.500M1139 753v3M1136 759l3-3 3 3" stroke="#a0a0a0"/></svg>
<svg class="a" style="left:1164px;top:742px" width="210" height="20" viewBox="1164 742 210 20" fill="none" stroke="#8a8a8a" stroke-width="1.100"><path d="M1167 751.500h6M1292.500 751.500h7M1296 748v7"/><path d="M1180 751.500h105" stroke="#bdbdbd"/><path d="M1233.500 749v5" stroke="#bdbdbd"/><path d="M1212.500 746h4v11h-4z" fill="#555" stroke="none"/><path d="M1357.500 746.500h10v10h-10z" stroke="#aaa"/><path d="M1359.500 748.500l2 2M1365.500 748.500l-2 2M1359.500 754.500l2-2M1365.500 754.500l-2-2" stroke="#999"/></svg>
<div class="a" style="left:1314px;top:744px;font-size:12.300px;line-height:16px;color:#555">67%</div>
<!--TASK-->
<div id="task" class="a"></div>
<div class="a" style="left:3px;top:763px;width:51px;height:43px;background:#1d2b36"></div>
<svg class="a" style="left:19px;top:775px" width="20" height="20" viewBox="0 0 20 20" fill="#fff"><path d="M1 3.600l7.300-1v6.900h-7.300zM9.300 2.400l9.200-1.300v8.400h-9.200zM1 10.500h7.300v6.900l-7.300-1zM9.300 10.500h9.200v8.400l-9.200-1.300z"/></svg>
<div class="a" style="left:54px;top:763px;width:369px;height:43px;background:#f4f4f4"></div>
<svg class="a" style="left:66px;top:774px" width="22" height="22" viewBox="0 0 22 22" fill="none" stroke="#333" stroke-width="1.700"><circle cx="13" cy="8.500" r="5.500"/><path d="M9 12.500l-6.500 6.500"/></svg>
<div class="a" style="left:97px;top:773px;font-size:17.200px;line-height:24px;color:#222">在这里输入你要搜索的内容</div>
<svg class="a" style="left:430px;top:764px" width="270" height="42" viewBox="430 764 270 42" fill="none"><circle cx="448.500" cy="784" r="7.700" stroke="#fff" stroke-width="2.600"/><path d="M493.500 777.500h9v13h-9z" stroke="#c4ccd2" stroke-width="1.600"/><path d="M490 779v10M506 779v10" stroke="#aab4bc" stroke-width="1.500"/><path d="M509.500 776.500v15" stroke="#c4ccd2" stroke-width="1.200"/><rect x="542.500" y="771.500" width="25.500" height="25" rx="2.500" fill="#0f6cf2"/><path d="M549 785.500h12.500c.5-5-2.500-8.500-6.500-8.500-4.500 0-7.500 3.500-7.500 8 0 4.500 3 7.500 7.500 7.500 2.500 0 4.500-1 6-3" stroke="#fff" stroke-width="3"/><rect x="582.500" y="764" width="53" height="42" fill="#4a565f"/><rect x="582.500" y="803" width="53" height="3" fill="#76b9ed"/><circle cx="612" cy="783.500" r="11.500" fill="#ed6c47"/><path d="M612 772a11.500 11.500 0 0 1 11.500 11.500h-11.500z" fill="#ff8f6b"/><path d="M612 795a11.500 11.500 0 0 0 11.500-11.500h-11.500z" fill="#d35230"/><rect x="596" y="776" width="15" height="15" rx="1.500" fill="#c43e1c"/><path d="M601 787.500v-8h3.200c3.400 0 3.400 4.800 0 4.800h-3.200" stroke="#fff" stroke-width="1.700"/><rect x="641" y="803" width="43.500" height="3" fill="#76b9ed"/><path d="M650 779l24-6v7z" fill="#35c1f1"/><rect x="650" y="778.500" width="25" height="18.500" fill="#0d6fc4"/><path d="M650 778.500h25v3.500l-25 2z" fill="#2a8ee0"/><path d="M658.500 782.500l9 5.500-9 5.500z" fill="#fff"/></svg>
<div class="a" style="left:884px;top:763px;width:19px;height:43px;background:#fff"></div>
<svg class="a" style="left:884px;top:763px" width="490" height="43" viewBox="884 763 490 43" fill="none"><path d="M889 776l4.500-4.500 4.500 4.500M889 794l4.500 4.500 4.500-4.500" stroke="#555" stroke-width="1.500"/><circle cx="923" cy="783.500" r="10.500" fill="#2d9de0" stroke="#e8f2fa" stroke-width="1.600"/><circle cx="931" cy="791.500" r="3.800" fill="#3fb2ee"/><g transform="translate(982 0) scale(.86 1) translate(-975 0)"><path d="M960 792.500h22c4 0 6-2.500 6-5.500s-3-5.500-6-5c-1-5-5.500-7-9.500-6-3 .800-5 3-5.500 6-4.500-.500-8 2-8 5.500s3 5 6 5z" fill="#dcecf9"/><path d="M960 792.500h22c4 0 6-2.500 6-5.500 0-1-.300-2-1-3-4 5-12 6-24 4-2 .500-4 1.500-5 3 .500 1 1.500 1.500 2 1.500z" fill="#8fc3ee"/></g><path d="M1051.500 787l5.500-5.500 5.500 5.500" stroke="#fff" stroke-width="1.500"/><rect x="1078.500" y="773.500" width="6.500" height="13" rx="2.500" fill="#fff"/><path d="M1076 783c0 4.500 2.500 6.500 6 6.500s6-2 6-6.500M1082 789.500v4" stroke="#e4e8ea" stroke-width="1.200"/><rect x="1101.500" y="779.500" width="14" height="9" fill="#f0f2f3"/><path d="M1099.500 782v4" stroke="#f0f2f3" stroke-width="1.500"/><path d="M1099 777.500l5 4" stroke="#cfd6da" stroke-width="1.500"/><path d="M1127.500 791.500c0-7 5-12 12-12M1131.500 791.500c0-5 3-8 8-8M1135.500 791.500c0-2.500 1.500-4 4-4" stroke="#8d989f" stroke-width="1.400"/><path d="M1151.500 781.500h3l4-3.500v12l-4-3.500h-3z" fill="#aab3b9"/><path d="M1161 780.500c1.500 2 1.500 5.500 0 7.500M1163.500 778.500c2.500 3.500 2.500 8 0 11.500" stroke="#aab3b9" stroke-width="1.200"/><path d="M1209.500 775.500h14v15h-14zM1209.500 780h14M1209.500 785h14M1214 775.500v15M1219 775.500v15" stroke="#fff" stroke-width="1.500"/><path d="M1331.500 775.500h17v12.500h-7l-4 3.500v-3.500h-6z" fill="#fff"/><path d="M1335 779.500h10M1335 783.500h7" stroke="#9aa4aa" stroke-width="1.100"/><circle cx="1347.500" cy="789" r="3" fill="#c4ccd1"/><path d="M1369.500 765v39" stroke="#7d8a93" stroke-width="1"/></svg>
<div class="a" style="left:915.500px;top:773px;width:15px;text-align:center;font-size:17px;line-height:21px;color:#fff;font-weight:700">?</div>
<div class="a" style="left:999px;top:775px;font-size:14.500px;line-height:18px;color:#fff">14°C</div>
<div class="a" style="left:1177px;top:774px;font-size:15.500px;line-height:20px;color:#fff;font-weight:500">中</div>
<div class="a" style="left:1242px;top:767px;width:67px;text-align:center;font-size:13.300px;line-height:16px;color:#fff;letter-spacing:.2px">19:23</div>
<div class="a" style="left:1238px;top:787px;width:75px;text-align:center;font-size:13.300px;line-height:16px;color:#fff;letter-spacing:.3px">2021/10/8</div>
</div></div>
<!--RIGHT-->
<div class="a" style="left:1462px;top:10px;width:205px;height:120px;background:linear-gradient(180deg,#eef47c 0%,#d9ee50 12%,#8fdc10 40%,#6fd000 55%,#a6e030 75%,#f2f48a 92%,#f4f59a 100%);filter:blur(.5px)"></div>
<div class="a" style="left:1464px;top:12px;width:201px;height:5px;background:#ecf378;filter:blur(.6px)"></div>
<div class="a" style="left:1464px;top:123px;width:201px;height:5.500px;background:#f3f48e;filter:blur(.6px)"></div>
<svg class="a" style="left:1468px;top:16px" width="193" height="108" viewBox="1468 16 193 108"><defs><filter id="bl" x="-20%" y="-20%" width="140%" height="140%"><feGaussianBlur stdDeviation="3.2"/></filter><filter id="bl2" x="-20%" y="-20%" width="140%" height="140%"><feGaussianBlur stdDeviation="1.600"/></filter><clipPath id="cp"><rect x="1468" y="16" width="193" height="108"/></clipPath></defs><g clip-path="url(#cp)"><rect x="1468" y="16" width="193" height="108" fill="#cbbf9b"/><g filter="url(#bl)"><rect x="1460" y="10" width="52" height="120" fill="#d3c9a6"/><ellipse cx="1486" cy="78" rx="14" ry="17" fill="#8fb8ae"/><rect x="1509" y="14" width="40" height="100" fill="#55532a"/><ellipse cx="1530" cy="52" rx="8" ry="16" fill="#d8e0c8"/><ellipse cx="1532" cy="88" rx="9" ry="12" fill="#8a8f6a"/><rect x="1550" y="10" width="120" height="40" fill="#c4b48e"/><ellipse cx="1569" cy="27" rx="10" ry="9" fill="#c98a62"/><ellipse cx="1606" cy="44" rx="9" ry="9" fill="#c47a56"/><rect x="1585" y="50" width="30" height="60" fill="#b39a70"/><rect x="1612" y="20" width="30" height="110" fill="#e2dcbc"/><rect x="1644" y="50" width="22" height="70" fill="#a88f64"/><rect x="1622" y="117" width="42" height="10" fill="#c2402c"/></g><g filter="url(#bl2)"><path d="M1521 126c0-22 8-30 32-36l22-2c26 4 44 12 48 38z" fill="#e4e0c6"/><path d="M1552 98h14l2 28h-16z" fill="#c3cfd8"/><ellipse cx="1563" cy="50" rx="24" ry="20" fill="#2f2a23"/><path d="M1541 52c-2 8-1 14 2 18l3-14zM1586 52c3 8 2 16-1 22l-4-16z" fill="#2f2a23"/><ellipse cx="1561" cy="68" rx="16.500" ry="22" fill="#ccb59c"/><path d="M1544 58c2-10 10-14 20-13 9 1 14 5 16 12-6-4-12-6-20-5-7 1-12 3-16 6z" fill="#2f2a23"/><path d="M1546 61h30" stroke="#6a6470" stroke-width="1.400" fill="none"/><ellipse cx="1553" cy="62" rx="6" ry="4" fill="none" stroke="#77727e" stroke-width="1.200"/><ellipse cx="1569" cy="62" rx="6" ry="4" fill="none" stroke="#77727e" stroke-width="1.200"/><path d="M1555 80h11" stroke="#9a6a66" stroke-width="2.200" fill="none"/><ellipse cx="1572" cy="103" rx="9" ry="10" fill="#c9ad92"/><path d="M1565 118c8-8 20-8 30 0v8h-30z" fill="#e8e4cc"/></g></g></svg>
<div class="a" style="left:1468px;top:100px;width:55px;height:24px;background:rgba(50,50,48,.82);filter:blur(.5px)"></div>
<div class="a" style="left:1473px;top:103px;font-size:15.300px;line-height:20px;color:#e6e6e6;font-weight:500;filter:blur(.5px)">王健昆</div>
<div class="a" style="left:1378.500px;top:403px;width:2px;height:32px;background:#686868;filter:blur(.4px)"></div><div class="a" style="left:1382.500px;top:403px;width:2px;height:32px;background:#686868;filter:blur(.4px)"></div>
<div class="a tile" style="top:133.3px;height:107px"><b>学术部—唐天利</b><i>学术部—唐天利</i><svg width="14" height="17" viewBox="0 0 14 17" fill="none"><rect x="5" y="1.500" width="5" height="9" rx="2.500" fill="#e0463e"/><path d="M3 8c0 3.500 2 5 4.500 5s4.500-1.500 4.500-5M7.500 13v2.500" stroke="#e0463e" stroke-width="1.300"/><path d="M12 1.500l-10 14" stroke="#e0463e" stroke-width="1.700"/></svg></div>
<div class="a tile" style="top:249.4px;height:107px"><b>张佳</b><i>张佳</i><svg width="14" height="17" viewBox="0 0 14 17" fill="none"><rect x="5" y="1.500" width="5" height="9" rx="2.500" fill="#e0463e"/><path d="M3 8c0 3.500 2 5 4.500 5s4.500-1.500 4.500-5M7.500 13v2.500" stroke="#e0463e" stroke-width="1.300"/><path d="M12 1.500l-10 14" stroke="#e0463e" stroke-width="1.700"/></svg></div>
<div class="a tile" style="top:365.5px;height:107px"><b>游凯雯</b><i>游凯雯</i><svg width="14" height="17" viewBox="0 0 14 17" fill="none"><rect x="5" y="1.500" width="5" height="9" rx="2.500" fill="#e0463e"/><path d="M3 8c0 3.500 2 5 4.500 5s4.500-1.500 4.500-5M7.500 13v2.500" stroke="#e0463e" stroke-width="1.300"/><path d="M12 1.500l-10 14" stroke="#e0463e" stroke-width="1.700"/></svg></div>
<div class="a tile" style="top:481.6px;height:107px"><b>林雪玲</b><i>林雪玲</i><svg width="14" height="17" viewBox="0 0 14 17" fill="none"><rect x="5" y="1.500" width="5" height="9" rx="2.500" fill="#e0463e"/><path d="M3 8c0 3.500 2 5 4.500 5s4.500-1.500 4.500-5M7.500 13v2.500" stroke="#e0463e" stroke-width="1.300"/><path d="M12 1.500l-10 14" stroke="#e0463e" stroke-width="1.700"/></svg></div>
<div class="a tile" style="top:597.7px;height:107px"><b>李金玥</b><i>李金玥</i><svg width="14" height="17" viewBox="0 0 14 17" fill="none"><rect x="5" y="1.500" width="5" height="9" rx="2.500" fill="#e0463e"/><path d="M3 8c0 3.500 2 5 4.500 5s4.500-1.500 4.500-5M7.500 13v2.500" stroke="#e0463e" stroke-width="1.300"/><path d="M12 1.500l-10 14" stroke="#e0463e" stroke-width="1.700"/></svg></div>
<div class="a tile" style="top:713.8px;height:112px"><b>刘彦汝</b><i>刘彦汝</i><svg width="14" height="17" viewBox="0 0 14 17" fill="none"><rect x="5" y="1.500" width="5" height="9" rx="2.500" fill="#e0463e"/><path d="M3 8c0 3.500 2 5 4.500 5s4.500-1.500 4.500-5M7.500 13v2.500" stroke="#e0463e" stroke-width="1.300"/><path d="M12 1.500l-10 14" stroke="#e0463e" stroke-width="1.700"/></svg></div>
</body>
</html>
